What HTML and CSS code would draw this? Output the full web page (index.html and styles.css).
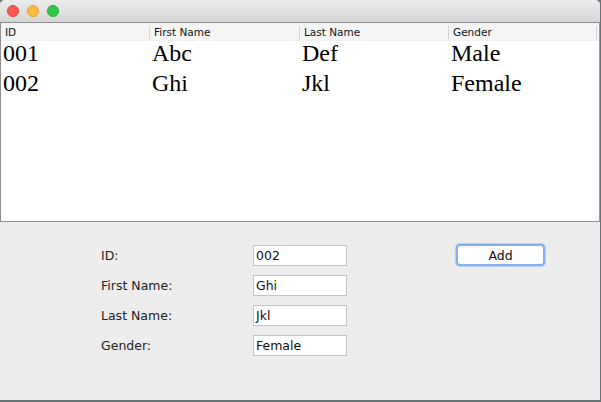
FILE: index.html
```html
<!DOCTYPE html>
<html>
<head>
<meta charset="utf-8">
<link rel="stylesheet" href="styles.css">
</head>
<body>
<div class="window">
  <div class="titlebar">
    <span class="light red"></span>
    <span class="light yellow"></span>
    <span class="light green"></span>
  </div>
  <div class="table">
    <div class="thead">
      <div class="th">ID</div>
      <div class="th">First Name</div>
      <div class="th">Last Name</div>
      <div class="th">Gender</div>
    </div>
    <div class="tr">
      <div class="td">001</div>
      <div class="td">Abc</div>
      <div class="td">Def</div>
      <div class="td">Male</div>
    </div>
    <div class="tr">
      <div class="td">002</div>
      <div class="td">Ghi</div>
      <div class="td">Jkl</div>
      <div class="td">Female</div>
    </div>
  </div>
  <div class="form">
    <label class="lbl">ID:</label>
    <div class="field">002</div>
    <div class="spacer"></div>
    <button class="btn">Add</button>
    <label class="lbl">First Name:</label>
    <div class="field">Ghi</div>
    <div class="spacer"></div>
    <div class="spacer"></div>
    <label class="lbl">Last Name:</label>
    <div class="field">Jkl</div>
    <div class="spacer"></div>
    <div class="spacer"></div>
    <label class="lbl">Gender:</label>
    <div class="field">Female</div>
  </div>
</div>
</body>
</html>
```

FILE: styles.css
```css
html, body {
  margin: 0;
  padding: 0;
}
body {
  width: 601px;
  height: 402px;
  background: #667676;
  overflow: hidden;
}
.window {
  width: 600px;
  height: 400px;
  background: #ededed;
  display: flex;
  flex-direction: column;
  border-radius: 5px 5px 0 0;
  overflow: hidden;
}
.titlebar {
  height: 22px;
  flex: none;
  background: linear-gradient(#ececec, #d6d6d6);
  display: flex;
  align-items: center;
  gap: 8px;
  padding-left: 7px;
  box-sizing: border-box;
}
.light {
  width: 12px;
  height: 12px;
  border-radius: 50%;
  box-sizing: border-box;
}
.red { background: #fc5753; border: 1px solid #df4744; }
.yellow { background: #fdbc40; border: 1px solid #de9f34; }
.green { background: #33c748; border: 1px solid #27aa35; }
.table {
  height: 200px;
  flex: none;
  background: #ffffff;
  border: 1px solid #8f8f8f;
  border-right-color: #9a9a9a;
  box-sizing: border-box;
}
.thead {
  display: grid;
  grid-template-columns: 149px 150px 149px 148px;
  height: 17px;
  background: #f5f5f5;
  border-bottom: 1px solid #f0f0f0;
}
.th {
  font-family: "DejaVu Sans", sans-serif;
  font-size: 10.5px;
  color: #111;
  padding-left: 4px;
  border-right: 1px solid #d2d2d2;
  margin: 3px 0 1px;
  line-height: 13px;
}
.tr {
  display: grid;
  grid-template-columns: 149px 150px 149px 148px;
  height: 30px;
}
.td {
  font-family: "Liberation Serif", serif;
  font-size: 24px;
  line-height: 25px;
  color: #000;
  padding-left: 2px;
}
.tr .td + .td {
  padding-left: 2px;
}
.form {
  flex: 1;
  display: grid;
  grid-template-columns: 152px 94px 109px 89px;
  grid-auto-rows: 21px;
  row-gap: 9px;
  padding: 23px 0 0 101px;
  align-content: start;
}
.lbl {
  font-family: "DejaVu Sans", sans-serif;
  font-size: 12.5px;
  line-height: 21px;
  color: #222;
}
.field {
  background: #fff;
  border: 1px solid #c3c3c3;
  box-sizing: border-box;
  font-family: "DejaVu Sans", sans-serif;
  font-size: 12.5px;
  line-height: 19px;
  padding-left: 2px;
  color: #111;
}
.btn {
  margin-top: -1px;
  height: 22px;
  background: #fff;
  border: 2px solid #85aef0;
  border-radius: 4px;
  box-sizing: border-box;
  font-family: "DejaVu Sans", sans-serif;
  font-size: 12.5px;
  color: #111;
  padding: 0;
  box-shadow: 0 0 0 1px #b7cff5;
}
```
